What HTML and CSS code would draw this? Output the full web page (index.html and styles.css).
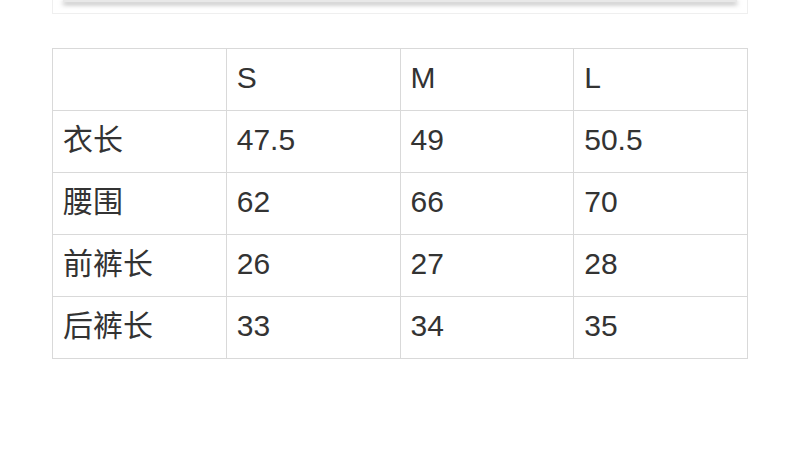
FILE: index.html
```html
<!DOCTYPE html>
<html lang="zh">
<head>
<meta charset="utf-8">
<link rel="stylesheet" href="styles.css">
</head>
<body>
<div class="page">
  <div class="frame">
    <div class="frame-inner"></div>
  </div>
  <table class="size-table">
    <tr><td></td><td>S</td><td>M</td><td>L</td></tr>
    <tr><td>衣长</td><td>47.5</td><td>49</td><td>50.5</td></tr>
    <tr><td>腰围</td><td>62</td><td>66</td><td>70</td></tr>
    <tr><td>前裤长</td><td>26</td><td>27</td><td>28</td></tr>
    <tr><td>后裤长</td><td>33</td><td>34</td><td>35</td></tr>
  </table>
</div>
</body>
</html>
```
FILE: styles.css
```css
html, body {
  margin: 0;
  padding: 0;
  background: #ffffff;
}
.page {
  padding: 0 52px;
  font-family: "Liberation Sans", "Noto Sans CJK SC", sans-serif;
  color: #333333;
}
.frame {
  box-sizing: border-box;
  height: 14px;
  border: 1px solid #efefef;
  border-top: none;
  padding: 0 10px;
}
.frame-inner {
  height: 2px;
  background: #e8e8e8;
  box-shadow: 0 2px 5px rgba(0, 0, 0, 0.5);
}
.size-table {
  margin-top: 34px;
  width: 696px;
  border-collapse: collapse;
  table-layout: fixed;
}
.size-table td {
  border: 1px solid #d9d9d9;
  height: 62px;
  padding: 0 10px 4px;
  font-size: 30px;
  line-height: 1;
  vertical-align: middle;
  box-sizing: border-box;
}
```
